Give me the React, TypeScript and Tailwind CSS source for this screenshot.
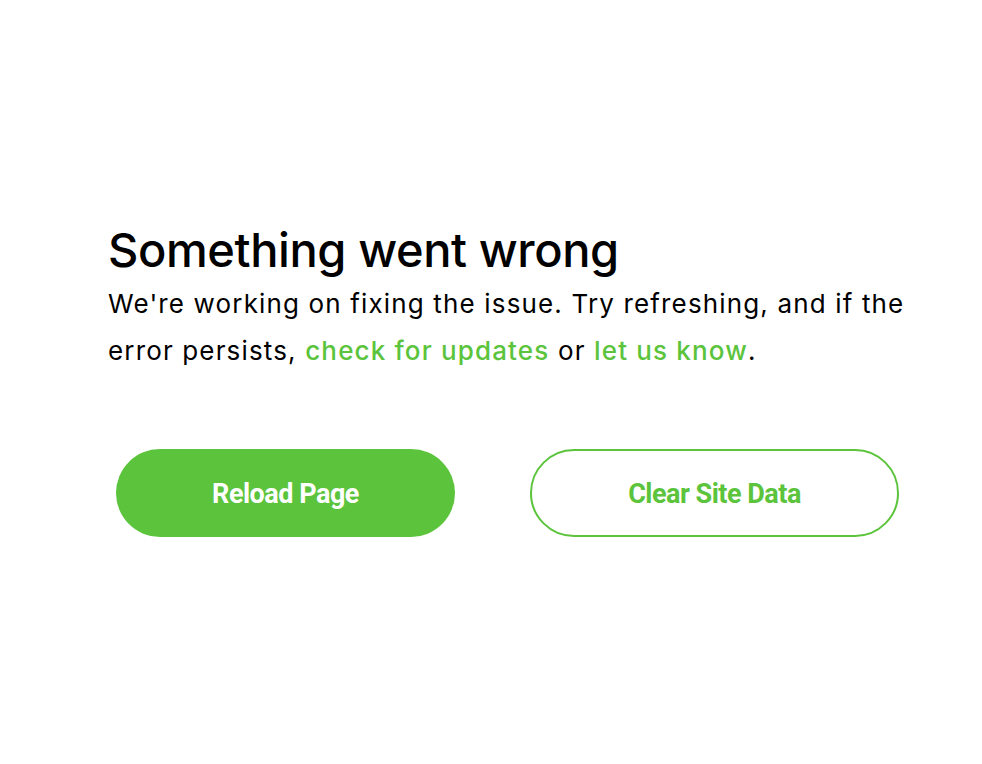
export default function App() {
  return (
    <div className="flex h-[764px] w-[982px] items-center bg-white" style={{ fontFamily: "Inter, 'Noto Sans', sans-serif" }}>
      <div className="-mt-[5px] pl-[108px] pr-[60px]">
        <h1 className="text-[47px] leading-[54px] font-medium tracking-[-0.4px] text-black">Something went wrong</h1>
        <p className="mt-[3px] w-[810px] text-[26px] leading-[47px] text-black tracking-[1.15px]">
          We're working on fixing the issue. Try refreshing, and if the error persists,{" "}
          <a className="font-medium text-[#5bc43c]">check for updates</a> or <a className="font-medium text-[#5bc43c]">let us know</a>.
        </p>
        <div className="mt-[75px] flex gap-[75px] pl-[8px]" style={{ fontFamily: "Roboto, 'Liberation Sans', sans-serif" }}>
          <button className="flex h-[88px] w-[339px] items-center justify-center rounded-full bg-[#5bc43c] pt-[3px] text-[27px] font-bold tracking-[-0.5px] text-white">
            Reload Page
          </button>
          <button className="flex h-[88px] w-[369px] items-center justify-center rounded-full border-2 border-[#5bc43c] bg-white pt-[3px] text-[27px] font-bold tracking-[-0.5px] text-[#5bc43c]">
            Clear Site Data
          </button>
        </div>
      </div>
    </div>
  );
}
